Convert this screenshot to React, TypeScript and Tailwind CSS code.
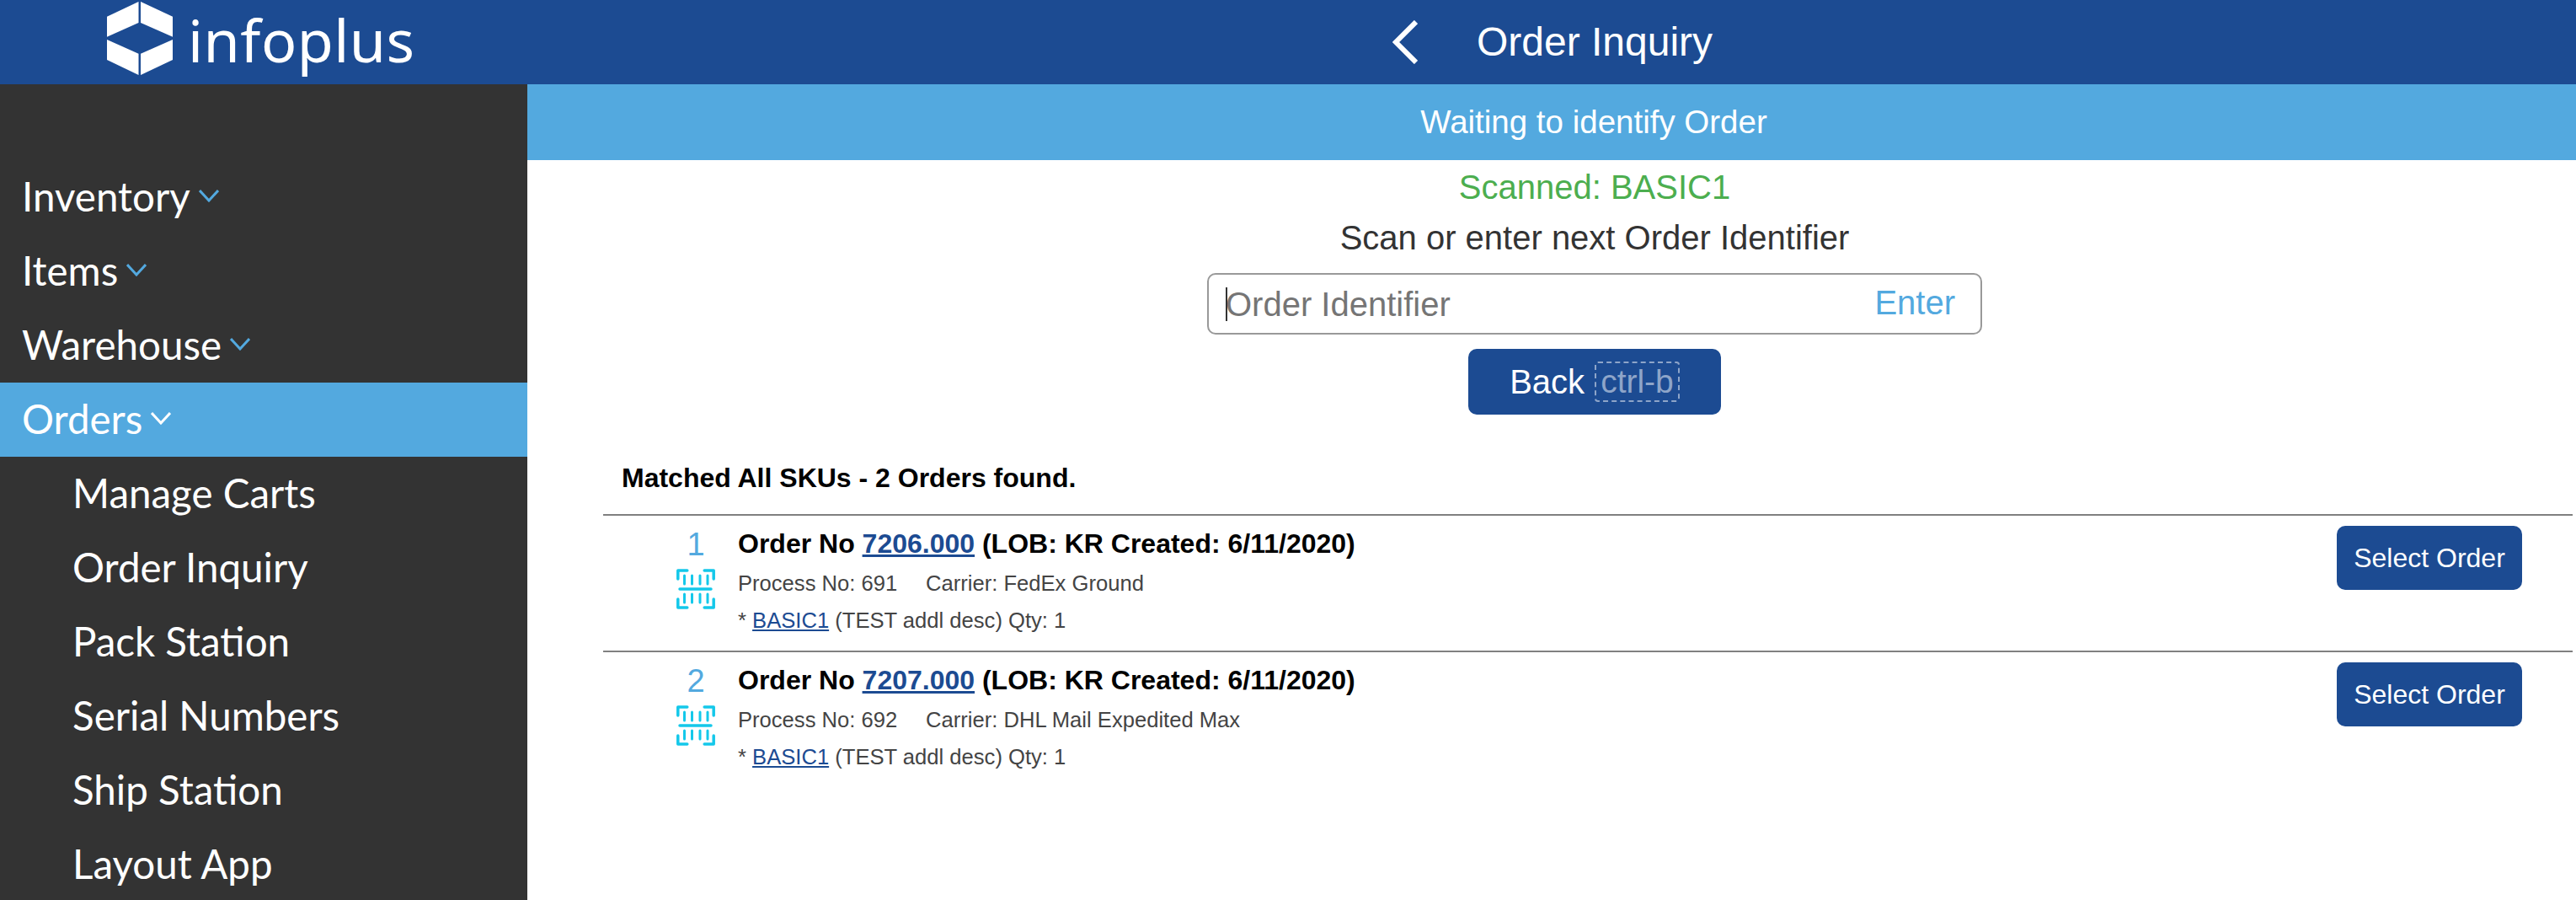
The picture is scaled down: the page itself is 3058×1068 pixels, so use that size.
const navTop = [
  { label: "Inventory" },
  { label: "Items" },
  { label: "Warehouse" },
  { label: "Orders", active: true },
];

const navSub = ["Manage Carts", "Order Inquiry", "Pack Station", "Serial Numbers", "Ship Station", "Layout App"];

const orders = [
  { idx: 1, no: "7206.000", process: "691", carrier: "FedEx Ground" },
  { idx: 2, no: "7207.000", process: "692", carrier: "DHL Mail Expedited Max" },
];

function Logo() {
  return (
    <svg width="78" height="87" viewBox="0 0 78 87" fill="#fff" className="-mt-[9px] shrink-0">
      <polygon points="37.5,0 0,17.7 0,41.7 37.5,25" />
      <polygon points="40,0 78,17.7 78,41.7 40,25" />
      <polygon points="0,45 37.5,61.7 37.5,87 0,69" />
      <polygon points="40,61.7 78,45 78,69 40,87" />
    </svg>
  );
}

function BarcodeIcon() {
  return (
    <svg width="46" height="48" viewBox="0 0 46 48" fill="none" stroke="#14c8ea" strokeWidth="3.5" strokeLinecap="round" strokeLinejoin="round">
      <path d="M1.8 12V2h11M33.2 2h11v10M1.8 36v10h11M33.2 46h11V36" />
      <path d="M9.5 8v10M18.5 8v10M28 8v10M37 8v10M9.5 30v10M18.5 30v10M28 30v10M37 30v10" strokeWidth="3" />
      <path d="M4 24h37" />
    </svg>
  );
}

function NavChevron({ white }: { white?: boolean }) {
  return (
    <svg width="24" height="15" viewBox="0 0 24 15" fill="none" stroke={white ? "#fff" : "#53a9df"} strokeWidth="3">
      <path d="M1 1l11 12L23 1" />
    </svg>
  );
}

export default function App() {
  return (
    <div className="h-screen overflow-hidden bg-white font-['Liberation_Sans',sans-serif]">
      <header className="h-[100px] flex items-center bg-[#1c4b92] text-white">
        <div className="w-[626px] shrink-0 flex items-center gap-[18px] pl-[127px]">
          <Logo />
          <span className="font-['Noto_Sans',sans-serif] font-normal text-[70px] leading-[84px] tracking-[0.5px] -mt-[6px]">infoplus</span>
        </div>
        <div className="flex items-center gap-[70px] pl-[1027px]">
          <svg width="30" height="52" viewBox="0 0 30 52" fill="none" stroke="#fff" strokeWidth="6">
            <path d="M28 2L4 26l24 24" />
          </svg>
          <span className="text-[48px] leading-none">Order Inquiry</span>
        </div>
      </header>
      <div className="flex">
        <nav className="w-[626px] h-[968px] shrink-0 bg-[#333333] pt-[90px] text-white font-['Lato',sans-serif] text-[47.5px]">
          {navTop.map((n) => (
            <div key={n.label} className={`h-[88px] pb-[3px] flex items-center gap-[10px] pl-[26px] ${n.active ? "bg-[#53a9df]" : ""}`}>
              {n.label}
              <NavChevron white={n.active} />
            </div>
          ))}
          {navSub.map((s) => (
            <div key={s} className="h-[88px] pb-[3px] flex items-center pl-[86px]">
              {s}
            </div>
          ))}
        </nav>
        <main className="flex-1 min-w-0">
          <div className="h-[90px] pl-[100px] flex items-center justify-center bg-[#53a9df] text-white text-[38.5px]">
            Waiting to identify Order
          </div>
          <div className="pl-[102px] flex flex-col items-center">
            <div className="h-[64px] flex items-center text-[40px] text-[#4cae4f]">Scanned: BASIC1</div>
            <div className="h-[56px] flex items-center text-[40px] text-[#333333]">Scan or enter next Order Identifier</div>
            <div className="relative mt-[14px] w-[920px] h-[73px] flex items-center border-2 border-[#999999] rounded-[10px] pl-[20px] pr-[30px]">
              <span className="absolute left-[20px] top-[15px] w-[2px] h-[40px] bg-[#333333]" />
              <input placeholder="Order Identifier" className="flex-1 min-w-0 outline-none text-[40px] placeholder:text-[#757575]" />
              <span className="text-[40px] text-[#53a9df] -mt-[4px]">Enter</span>
            </div>
            <button className="mt-[17px] w-[300px] h-[78px] flex items-center justify-center gap-[12px] rounded-[10px] bg-[#1c4b92] text-white text-[40px]">
              Back
              <span className="h-[48px] px-[5px] flex items-center border-2 border-dashed border-[#8ea5c9] rounded-[4px] text-[39px] text-[#8ea5c9]">ctrl-b</span>
            </button>
          </div>
          <div className="pl-[90px] pr-[4px]">
            <div className="h-[118px] pt-[56px] pl-[22px] font-bold text-[32px] leading-[38px] text-black">Matched All SKUs - 2 Orders found.</div>
            {orders.map((o) => (
              <div key={o.idx} className="h-[162px] border-t-2 border-[#808080] flex">
                <div className="w-[160px] shrink-0 flex flex-col items-center pl-[64px] pr-[4px]">
                  <span className="text-[38px] leading-[44px] mt-[12px] text-[#53a9df]">{o.idx}</span>
                  <span className="mt-[7px]">
                    <BarcodeIcon />
                  </span>
                </div>
                <div className="flex-1 min-w-0 pt-[14px]">
                  <div className="font-bold text-[32px] leading-[38px] text-black">
                    Order No <a className="text-[#1c4b92] underline">{o.no}</a> (LOB: KR Created: 6/11/2020)
                  </div>
                  <div className="flex mt-[12px] text-[25.6px] leading-[32px] text-[#444444]">
                    <span className="w-[223px]">Process No: {o.process}</span>
                    <span>Carrier: {o.carrier}</span>
                  </div>
                  <div className="mt-[12px] text-[25.6px] leading-[32px] text-[#444444]">
                    * <a className="text-[#1c4b92] underline">BASIC1</a> (TEST addl desc) Qty: 1
                  </div>
                </div>
                <button className="mt-[12px] mr-[60px] w-[220px] h-[76px] shrink-0 rounded-[10px] bg-[#1c4b92] text-white text-[32px]">Select Order</button>
              </div>
            ))}
          </div>
        </main>
      </div>
    </div>
  );
}
